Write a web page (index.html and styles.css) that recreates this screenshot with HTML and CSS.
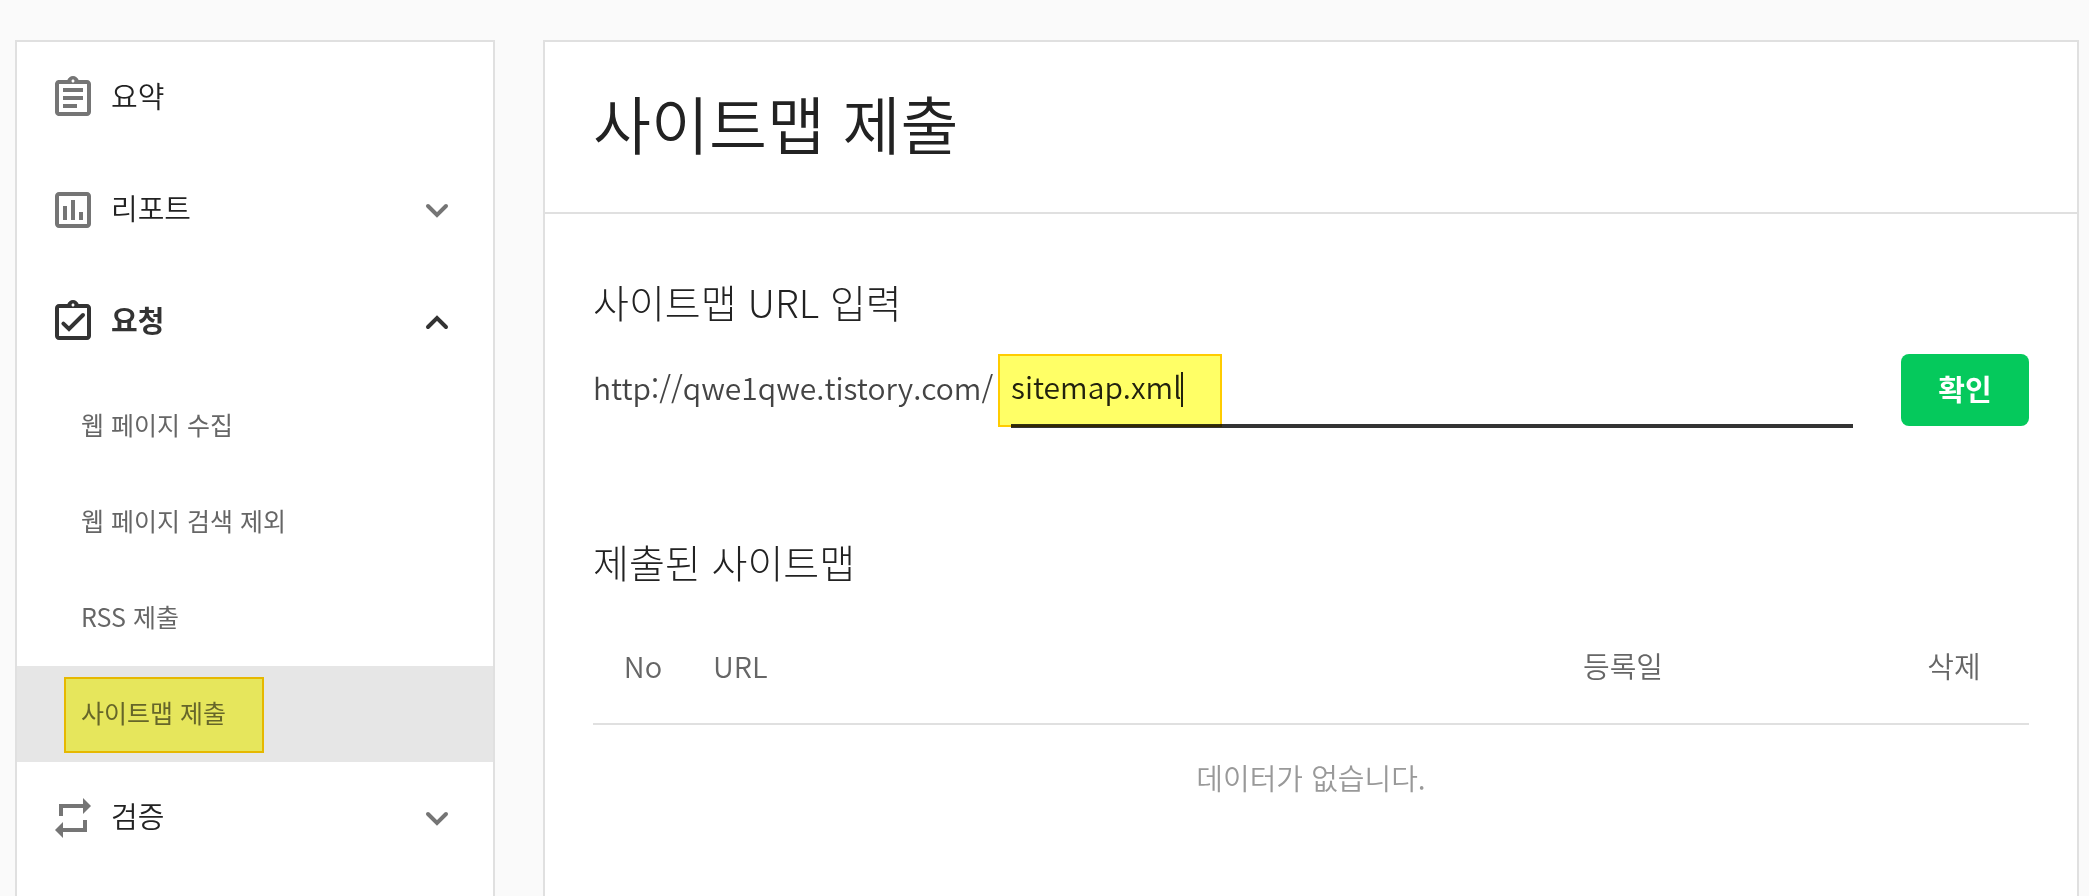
FILE: index.html
```html
<!DOCTYPE html>
<html lang="ko">
<head>
<meta charset="utf-8">
<meta name="viewport" content="width=device-width, initial-scale=1">
<title>사이트맵 제출</title>
<link rel="stylesheet" href="styles.css">
</head>
<body>
<div class="layout">
  <nav class="sidebar">
    <ul class="menu">
      <li>
        <a class="menu-item" href="#summary">
          <svg class="icon" viewBox="0 0 24 24" aria-hidden="true"><path d="M7 15h7v2H7zm0-4h10v2H7zm0-4h10v2H7zm12-4h-4.18C14.4 1.84 13.3 1 12 1c-1.3 0-2.4.84-2.82 2H5c-.14 0-.27.01-.4.04a2.008 2.008 0 0 0-1.44 1.19c-.1.23-.16.49-.16.77v14c0 .27.06.54.16.78s.25.45.43.64c.27.27.62.47 1.01.55.13.02.26.03.4.03h14c1.1 0 2-.9 2-2V5c0-1.1-.9-2-2-2zm-7-.25c.41 0 .75.34.75.75s-.34.75-.75.75-.75-.34-.75-.75.34-.75.75-.75zM19 19H5V5h14v14z"/></svg>
          <span class="menu-label">요약</span>
        </a>
      </li>
      <li>
        <button class="menu-item" type="button" aria-expanded="false">
          <svg class="icon" viewBox="0 0 24 24" aria-hidden="true"><path d="M9 17H7v-7h2v7zm4 0h-2V7h2v10zm4 0h-2v-4h2v4zm2 2H5V5h14v14zm0-16H5c-1.1 0-2 .9-2 2v14c0 1.1.9 2 2 2h14c1.1 0 2-.9 2-2V5c0-1.1-.9-2-2-2z"/></svg>
          <span class="menu-label">리포트</span>
          <svg class="chevron" viewBox="0 0 24 16" aria-hidden="true"><path d="M3 4l9 9 9-9"/></svg>
        </button>
      </li>
      <li>
        <button class="menu-item is-open" type="button" aria-expanded="true">
          <svg class="icon" viewBox="0 0 24 24" aria-hidden="true"><path d="M19 3h-4.18C14.4 1.84 13.3 1 12 1s-2.4.84-2.82 2H5c-1.1 0-2 .9-2 2v14c0 1.1.9 2 2 2h14c1.1 0 2-.9 2-2V5c0-1.1-.9-2-2-2zm-7-.25c.41 0 .75.34.75.75s-.34.75-.75.75-.75-.34-.75-.75.34-.75.75-.75zM19 19H5V5h14v14z"/><path class="tick" d="M7.2 12.8l2.8 2.7 7-7"/></svg>
          <span class="menu-label">요청</span>
          <svg class="chevron" viewBox="0 0 24 16" aria-hidden="true"><path d="M3 13l9-9 9 9"/></svg>
        </button>
        <ul class="submenu">
          <li><a class="submenu-item" href="#crawl">웹 페이지 수집</a></li>
          <li><a class="submenu-item" href="#exclude">웹 페이지 검색 제외</a></li>
          <li><a class="submenu-item" href="#rss">RSS 제출</a></li>
          <li><a class="submenu-item is-active" href="#sitemap" aria-current="page">사이트맵 제출</a></li>
        </ul>
      </li>
      <li>
        <button class="menu-item" type="button" aria-expanded="false">
          <svg class="icon" viewBox="0 0 24 24" aria-hidden="true"><path d="M5 5h12V2l4 4-4 4V7H7v4H5zM19 19H7v3l-4-4 4-4v3h10v-4h2z"/></svg>
          <span class="menu-label">검증</span>
          <svg class="chevron" viewBox="0 0 24 16" aria-hidden="true"><path d="M3 4l9 9 9-9"/></svg>
        </button>
      </li>
    </ul>
  </nav>

  <main class="content">
    <header class="content-header">
      <h1>사이트맵 제출</h1>
    </header>
    <section class="section">
      <h2><label for="sitemap-path">사이트맵 URL 입력</label></h2>
      <form class="url-form">
        <span class="url-prefix">http://qwe1qwe.tistory.com/</span>
        <span class="url-field">
          <input class="url-input" id="sitemap-path" type="text" value="sitemap.xml" autocomplete="off" spellcheck="false">
          <span class="caret"></span>
          <span class="url-mark"></span>
        </span>
        <button class="submit" type="button">확인</button>
      </form>
    </section>
    <section class="section">
      <h2>제출된 사이트맵</h2>
      <table class="sitemaps">
        <thead>
          <tr>
            <th class="col-no" scope="col">No</th>
            <th class="col-url" scope="col">URL</th>
            <th class="col-date" scope="col">등록일</th>
            <th class="col-delete" scope="col">삭제</th>
          </tr>
        </thead>
        <tbody>
          <tr><td colspan="4">데이터가 없습니다.</td></tr>
        </tbody>
      </table>
    </section>
  </main>
</div>
</body>
</html>
```
FILE: styles.css
```css
*,
*::after {
  box-sizing: border-box;
}

body {
  margin: 0;
  background: #fafafa;
  color: #222;
  font-family: "Noto Sans CJK KR", "Noto Sans", sans-serif;
  font-size: 29px;
  line-height: 40px;
}

h1,
h2,
ul {
  margin: 0;
  padding: 0;
}

ul {
  list-style: none;
}

a {
  color: inherit;
  text-decoration: none;
}

button,
input {
  font: inherit;
  color: inherit;
}

.layout {
  display: flex;
  gap: 48px;
  min-height: 100vh;
  padding: 40px 10px 0 15px;
}

.sidebar,
.content {
  background: #fff;
  border: 2px solid #e0e0e0;
  border-bottom: 0;
}

.sidebar {
  flex: 0 0 480px;
}

.content {
  flex: 1;
  min-width: 0;
}

/* Side menu */
.menu-item {
  display: flex;
  align-items: center;
  gap: 14px;
  width: 100%;
  height: 112px;
  padding: 0 44px 0 32px;
  border: 0;
  background: none;
  text-align: left;
  font-weight: 350;
}

.menu-label {
  flex: 1;
  padding-bottom: 6px;
}

.icon {
  width: 48px;
  height: 48px;
  fill: #757575;
}

.chevron {
  width: 24px;
  height: 16px;
  fill: none;
  stroke: #757575;
  stroke-width: 4;
  stroke-linecap: round;
}

.is-open {
  color: #333;
  font-weight: 700;
}

.is-open .icon {
  fill: #333;
}

.is-open .chevron {
  stroke: #333;
}

.icon .tick {
  fill: none;
  stroke: #333;
  stroke-width: 2;
  stroke-linecap: round;
}

.submenu-item {
  position: relative;
  display: flex;
  align-items: center;
  height: 96px;
  padding: 0 0 4px 64px;
  color: #666;
  font-size: 25px;
}

.is-active {
  background: #e6e6e6;
}

.is-active::after,
.url-mark {
  position: absolute;
  border: 2px solid #fc0;
  background: #ff6;
  mix-blend-mode: multiply;
  pointer-events: none;
}

.is-active::after {
  content: "";
  top: 11px;
  left: 47px;
  width: 200px;
  height: 76px;
}

/* Content */
.content-header {
  padding: 36px 48px 46px;
  border-bottom: 2px solid #e0e0e0;
}

h1 {
  font-size: 63px;
  font-weight: 350;
  line-height: 88px;
}

.section {
  padding: 60px 48px 0;
}

h2 {
  font-size: 39px;
  font-weight: 300;
  line-height: 54px;
}

.url-form {
  display: flex;
  align-items: flex-start;
  margin: 26px 0 46px;
  font-size: 30px;
  font-weight: 350;
}

.url-prefix {
  flex: 0 0 418px;
  padding-top: 13px;
  color: #444;
}

.url-field {
  position: relative;
  flex: 1;
  margin-right: 48px;
}

.url-input {
  display: block;
  width: 100%;
  height: 74px;
  padding: 0 0 6px;
  border: 0;
  border-bottom: 4px solid #333;
  border-radius: 0;
  outline: 0;
  background: none;
}

.caret {
  position: absolute;
  top: 18px;
  left: 170px;
  width: 2px;
  height: 35px;
  background: #222;
}

.url-mark {
  top: 0;
  left: -13px;
  width: 224px;
  height: 73px;
}

.submit {
  flex: 0 0 128px;
  height: 72px;
  padding: 0 0 4px;
  border: 0;
  border-radius: 8px;
  background: #05c95c;
  color: #fff;
  font-size: 29px;
  font-weight: 700;
}

.sitemaps {
  width: 100%;
  margin-top: 22px;
  border-collapse: collapse;
  table-layout: fixed;
  color: #666;
  text-align: center;
}

th {
  height: 114px;
  padding: 0 20px 4px;
  border-bottom: 2px solid #e0e0e0;
  font-weight: 350;
}

td {
  height: 108px;
  padding: 0 0 4px;
  color: #999;
  font-weight: 350;
}

.col-no {
  width: 100px;
}

.col-url {
  text-align: left;
}

.col-date {
  width: 512px;
}

.col-delete {
  width: 150px;
}
```
